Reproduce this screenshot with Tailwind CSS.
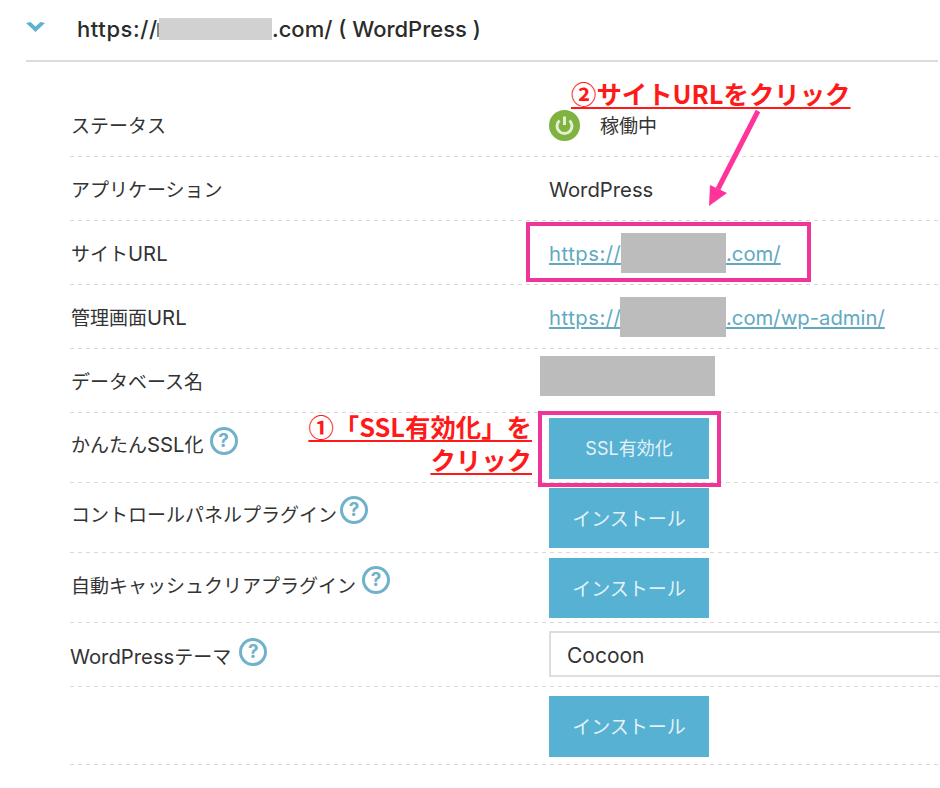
<!DOCTYPE html>
<html lang="ja">
<head>
  <meta charset="UTF-8">
  <title>WordPress</title>
  <script src="https://cdn.jsdelivr.net/npm/@tailwindcss/browser@4"></script>
</head>
<body class="bg-white text-[#333] font-['Inter','Noto_Sans_CJK_JP',sans-serif] relative w-[940px] h-[788px] overflow-hidden">

  <!-- header -->
  <div class="ml-[26px] mr-[2px] h-[62px] border-b-2 border-[#dcdcdc] flex items-center pb-[2px]">
    <svg class="w-[19px] h-[11px] -mt-[4px]" viewBox="0 0 21 12"><path d="M0 1 L5 0 L10.500 5 L16 0 L21 1 L10.500 11 Z" fill="#5fb2cf"/></svg>
    <div class="ml-[32px] flex items-center text-[22px] font-medium text-[#2b2b2b]">
      <span class="w-[80px] tracking-[0.6px]">https://</span><span class="w-[2px] h-[14px] bg-[#888] mt-[2px]"></span><span class="w-[113px] h-[22px] bg-[#d1d1d1]"></span><span>.com/ ( WordPress )</span>
    </div>
  </div>

  <!-- rows -->
  <div class="ml-[70px] mr-[2px] mt-[31px] text-[19px] leading-[28px]">
    <div class="h-[64px] bg-[image:repeating-linear-gradient(90deg,#d9d9d9_0_4px,transparent_4px_8px)] bg-bottom bg-no-repeat bg-size-[100%_1px] grid grid-cols-[479px_1fr] items-center">
      <div class="ml-[1px] pt-[4px]">ステータス</div>
      <div class="flex items-center gap-[20px]">
        <svg class="w-[31px] h-[31px]" viewBox="0 0 31 31"><circle cx="15.500" cy="15.500" r="15.500" fill="#7fb23f"/><path d="M10.500 10.500 A7.500 7.500 0 1 0 20.500 10.500" fill="none" stroke="#e4f0d4" stroke-width="3"/><path d="M15.500 6.500 V15" stroke="#e4f0d4" stroke-width="3"/></svg>
        <span class="pt-[4px]">稼働中</span>
      </div>
    </div>
    <div class="h-[64px] bg-[image:repeating-linear-gradient(90deg,#d9d9d9_0_4px,transparent_4px_8px)] bg-bottom bg-no-repeat bg-size-[100%_1px] grid grid-cols-[479px_1fr] items-center">
      <div class="ml-[1px] pt-[4px]">アプリケーション</div>
      <div class="pt-[2px] text-[20.300px]">WordPress</div>
    </div>
    <div class="h-[64px] bg-[image:repeating-linear-gradient(90deg,#d9d9d9_0_4px,transparent_4px_8px)] bg-bottom bg-no-repeat bg-size-[100%_1px] grid grid-cols-[479px_1fr] items-center">
      <div class="ml-[1px] pt-[2px]"><span>サイト</span><span class="text-[20.300px]">URL</span></div>
      <div class="flex items-center text-[#62a9c0] underline text-[20.300px]">
        <span class="w-[72px] pt-[2px] tracking-[0.5px]">https://</span><span class="w-[105px] h-[40px] bg-[#bcbcbc]"></span><span class="pt-[2px]">.com/</span>
      </div>
    </div>
    <div class="h-[64px] bg-[image:repeating-linear-gradient(90deg,#d9d9d9_0_4px,transparent_4px_8px)] bg-bottom bg-no-repeat bg-size-[100%_1px] grid grid-cols-[479px_1fr] items-center">
      <div class="ml-[1px] pt-[2px]"><span>管理画面</span><span class="text-[20.300px]">URL</span></div>
      <div class="flex items-center text-[#62a9c0] underline text-[20.300px]">
        <span class="w-[71px] pt-[2px] tracking-[0.5px]">https://</span><span class="w-[106px] h-[40px] bg-[#bcbcbc]"></span><span class="pt-[2px]">.com/wp-admin/</span>
      </div>
    </div>
    <div class="h-[64px] bg-[image:repeating-linear-gradient(90deg,#d9d9d9_0_4px,transparent_4px_8px)] bg-bottom bg-no-repeat bg-size-[100%_1px] grid grid-cols-[479px_1fr] items-center">
      <div class="ml-[1px] pt-[4px]">データベース名</div>
      <div class="w-[175px] h-[40px] bg-[#bcbcbc] -ml-[9px] -mt-[10px]"></div>
    </div>
    <div class="h-[70px] bg-[image:repeating-linear-gradient(90deg,#d9d9d9_0_4px,transparent_4px_8px)] bg-bottom bg-no-repeat bg-size-[100%_1px] grid grid-cols-[479px_1fr] items-start">
      <div class="ml-[1px] flex items-center gap-[6px] pt-[18px]">
        <span><span>かんたん</span><span class="text-[20.300px]">SSL</span><span>化</span></span>
        <span class="-mt-[10px] w-[28px] h-[28px] rounded-full border-[3px] border-[#70b2c9] text-[#70b2c9] font-bold text-[19px] leading-[22px] text-center">?</span>
      </div>
      <div class="pt-[5px]"><button class="w-[160px] h-[61px] bg-[#57b1d3] text-[#e4f2f7] text-[18px]">SSL有効化</button></div>
    </div>
    <div class="h-[70px] bg-[image:repeating-linear-gradient(90deg,#d9d9d9_0_4px,transparent_4px_8px)] bg-bottom bg-no-repeat bg-size-[100%_1px] grid grid-cols-[479px_1fr] items-start">
      <div class="ml-[1px] flex items-center gap-[3px] pt-[19px]">
        <span>コントロールパネルプラグイン</span>
        <span class="-mt-[12px] w-[28px] h-[28px] rounded-full border-[3px] border-[#70b2c9] text-[#70b2c9] font-bold text-[19px] leading-[22px] text-center">?</span>
      </div>
      <div class="pt-[5px]"><button class="w-[160px] h-[60px] pt-[4px] bg-[#57b1d3] text-[#e4f2f7] text-[19px]">インストール</button></div>
    </div>
    <div class="h-[70px] bg-[image:repeating-linear-gradient(90deg,#d9d9d9_0_4px,transparent_4px_8px)] bg-bottom bg-no-repeat bg-size-[100%_1px] grid grid-cols-[479px_1fr] items-start">
      <div class="ml-[1px] flex items-center gap-[6px] pt-[20px]">
        <span>自動キャッシュクリアプラグイン</span>
        <span class="-mt-[14px] w-[28px] h-[28px] rounded-full border-[3px] border-[#70b2c9] text-[#70b2c9] font-bold text-[19px] leading-[22px] text-center">?</span>
      </div>
      <div class="pt-[5px]"><button class="w-[160px] h-[60px] pt-[4px] bg-[#57b1d3] text-[#e4f2f7] text-[19px]">インストール</button></div>
    </div>
    <div class="h-[64px] bg-[image:repeating-linear-gradient(90deg,#d9d9d9_0_4px,transparent_4px_8px)] bg-bottom bg-no-repeat bg-size-[100%_1px] grid grid-cols-[479px_1fr] items-start">
      <div class="flex items-center gap-[8px] pt-[20px]">
        <span><span class="text-[20.300px]">WordPress</span><span>テーマ</span></span>
        <span class="-mt-[12px] w-[28px] h-[28px] rounded-full border-[3px] border-[#70b2c9] text-[#70b2c9] font-bold text-[19px] leading-[22px] text-center">?</span>
      </div>
      <div class="pt-[8px]">
        <div class="w-[391px] h-[46px] border-2 border-r-0 border-[#dedede] flex items-center pl-[16px] pt-[4px] text-[21px] text-[#333]">Cocoon</div>
      </div>
    </div>
    <div class="h-[78px] bg-[image:repeating-linear-gradient(90deg,#d9d9d9_0_4px,transparent_4px_8px)] bg-bottom bg-no-repeat bg-size-[100%_1px] grid grid-cols-[479px_1fr] items-start">
      <div></div>
      <div class="pt-[9px]"><button class="w-[160px] h-[61px] pt-[2px] bg-[#57b1d3] text-[#e4f2f7] text-[19px]">インストール</button></div>
    </div>
  </div>

  <!-- annotations -->
  <div class="absolute left-[526px] top-[222px] w-[285px] h-[60px] border-[4px] border-[#f0359a]"></div>
  <div class="absolute left-[538px] top-[411px] w-[183px] h-[76px] border-[4px] border-[#f0359a]"></div>
  <svg class="absolute left-[700px] top-[105px] w-[70px] h-[110px]" viewBox="0 0 70 110"><path d="M58 6 L18 84" stroke="#ff3399" stroke-width="5" fill="none"/><path d="M9 101 L10 80 L27 88 Z" fill="#ff3399"/></svg>
  <div class="absolute left-[571px] top-[75px] font-['Noto_Sans_CJK_JP',sans-serif] text-[25.400px] leading-[36px] font-bold text-[#ff1a1a] underline underline-offset-[3px] whitespace-nowrap">②サイトURLをクリック</div>
  <div class="absolute right-[408px] top-[410px] font-['Noto_Sans_CJK_JP',sans-serif] text-right text-[25.400px] leading-[33px] font-bold text-[#ff1a1a] underline underline-offset-[3px] whitespace-nowrap">①「SSL有効化」を<br>クリック</div>
</body>
</html>
